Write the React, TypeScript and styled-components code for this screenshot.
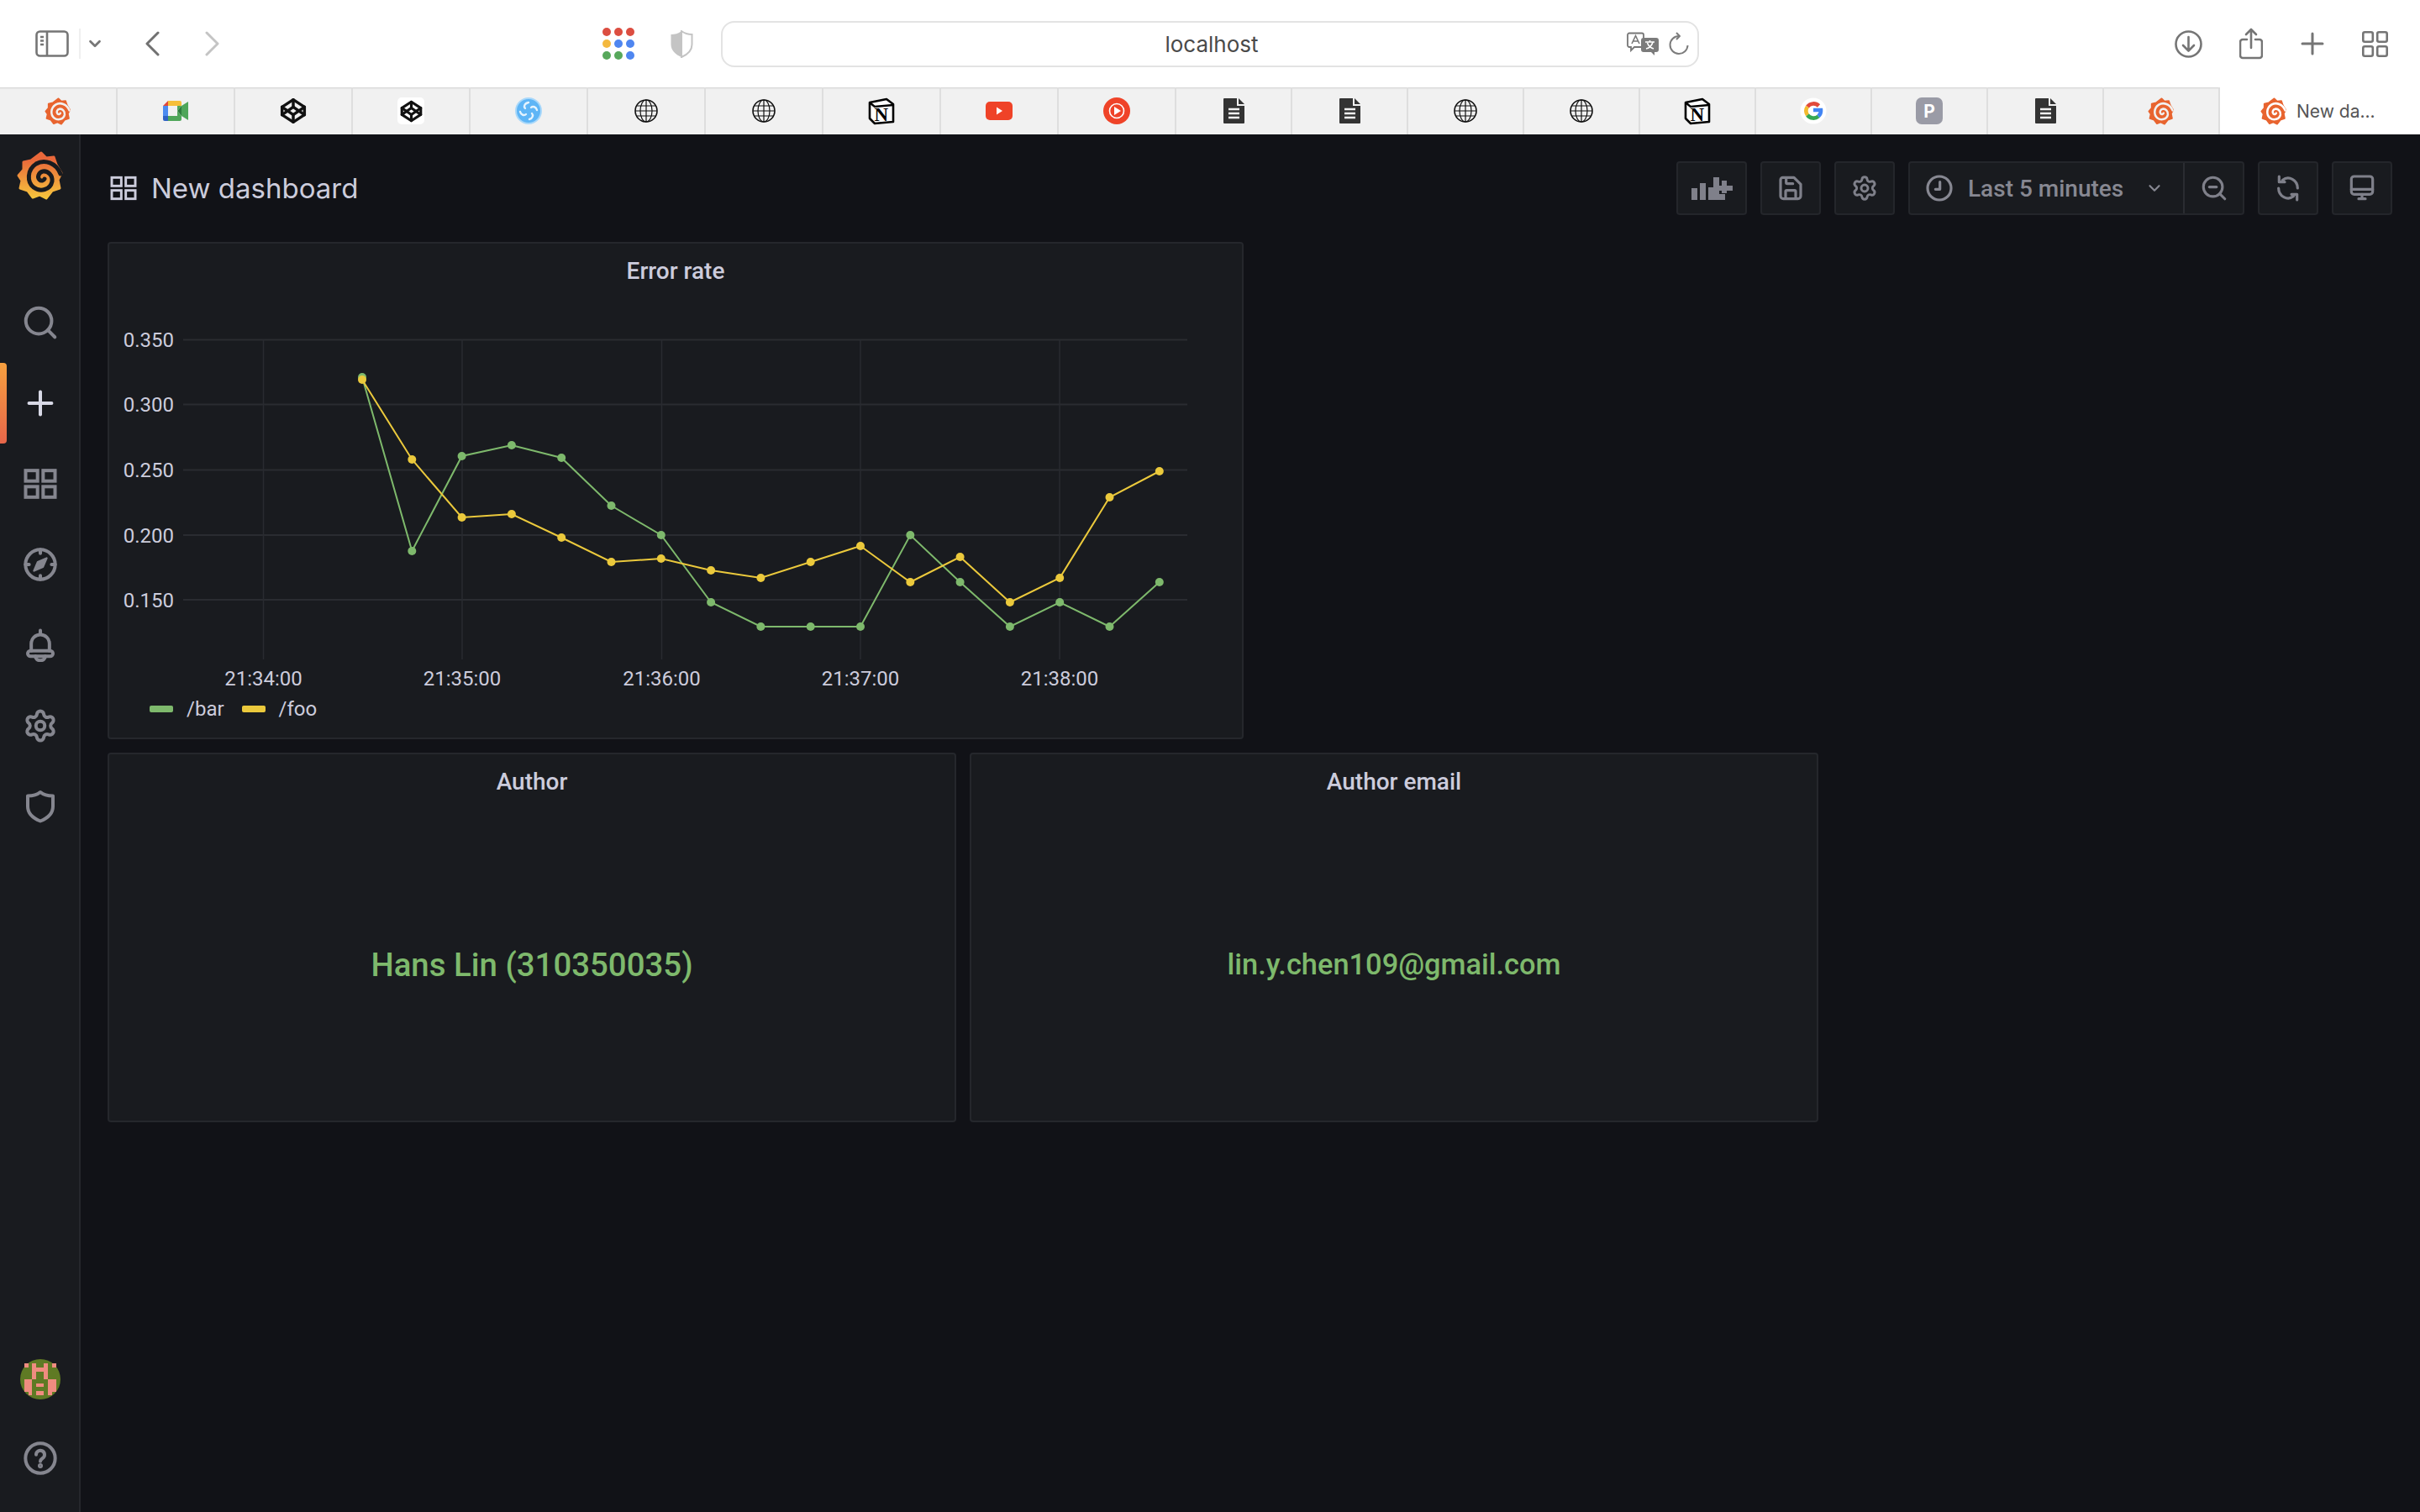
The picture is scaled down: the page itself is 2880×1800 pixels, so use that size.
import React from "react";
import styled, { createGlobalStyle } from "styled-components";
import { Search, Plus, Settings, ZoomOut, Codepen, ChevronDown } from "lucide-react";

const GlobalStyle = createGlobalStyle`
  html, body {
    margin: 0;
    padding: 0;
    background: #111217;
  }
`;

const Page = styled.div`
  width: 2880px;
  height: 1800px;
  display: flex;
  flex-direction: column;
  overflow: hidden;
  font-family: Roboto, "Liberation Sans", sans-serif;
`;

/* browser chrome */

const BrowserBar = styled.div`
  height: 104px;
  background: #fff;
  display: flex;
  align-items: center;
  color: #757575;
`;

const BarLeft = styled.div`
  width: 717px;
  padding-left: 42px;
  box-sizing: border-box;
  display: flex;
  align-items: center;
`;

const BarDivider = styled.div`
  width: 2px;
  height: 36px;
  background: #efefef;
  margin: 0 6px 0 12px;
`;

const ChromeIcon = styled.svg<{ $ml?: number }>`
  display: block;
  flex: none;
  margin-left: ${(p) => p.$ml ?? 0}px;
`;

const AddressBar = styled.div`
  width: 1164px;
  height: 55px;
  margin-left: 33px;
  box-sizing: border-box;
  border: 2px solid #e3e3e3;
  border-radius: 16px;
  display: flex;
  align-items: center;
  padding-right: 10px;
`;

const AddressText = styled.div`
  flex: 1;
  text-align: center;
  padding-left: 88px;
  font-family: Inter, "Liberation Sans", sans-serif;
  font-size: 26px;
  color: #4a4a4a;
`;

const BarRight = styled.div`
  flex: 1;
  display: flex;
  align-items: center;
  padding-left: 566px;
`;

const TabStrip = styled.div`
  height: 56px;
  display: flex;
  background: #f1f1f1;
  box-shadow: inset 0 3px 2px -2px #cfcfcf;
`;

const Tab = styled.div<{ $width: number }>`
  width: ${(p) => p.$width}px;
  box-sizing: border-box;
  border-right: 2px solid #dedede;
  display: flex;
  align-items: center;
  justify-content: center;
`;

const ActiveTab = styled.div`
  flex: 1;
  background: #fff;
  display: flex;
  align-items: center;
  padding-left: 47px;
  gap: 10px;
  font-family: Inter, "Liberation Sans", sans-serif;
  font-size: 21px;
  color: #555;
`;

/* grafana shell */

const Shell = styled.div`
  flex: 1;
  display: flex;
  background: #111217;
  min-height: 0;
`;

const Sidebar = styled.nav`
  width: 96px;
  box-sizing: border-box;
  padding-left: 2px;
  background: #191b1f;
  border-right: 2px solid #25272c;
  display: flex;
  flex-direction: column;
  align-items: stretch;
`;

const LogoSlot = styled.div`
  height: 176px;
  padding-top: 16px;
  box-sizing: border-box;
  display: flex;
  justify-content: center;
`;

const NavItem = styled.div<{ $active?: boolean }>`
  height: 96px;
  box-sizing: border-box;
  position: relative;
  display: flex;
  align-items: center;
  justify-content: center;
  color: ${(p) => (p.$active ? "#d8d9e6" : "#85868f")};

  ${(p) =>
    p.$active &&
    `&::before {
      content: "";
      position: absolute;
      left: -2px;
      top: 0;
      bottom: 0;
      width: 8px;
      border-radius: 0 4px 4px 0;
      background: linear-gradient(#f6a03f, #e6664a);
    }`}
`;

const AvatarSlot = styled(NavItem)`
  padding-top: 4px;
`;

const NavBottom = styled.div`
  margin-top: auto;
  padding-bottom: 16px;
`;

const Main = styled.main`
  flex: 1;
  display: flex;
  flex-direction: column;
  padding: 0 33px 0 32px;
  min-width: 0;
`;

const Header = styled.header`
  height: 128px;
  display: flex;
  align-items: center;
`;

const DashTitle = styled.div`
  display: flex;
  align-items: center;
  gap: 17px;
  padding-left: 3px;
  font-family: Inter, "Liberation Sans", sans-serif;
  font-size: 33px;
  color: #ccccdc;
  flex: 1;
`;

const Toolbar = styled.div`
  display: flex;
  gap: 16px;
`;

const ToolButton = styled.div<{ $width: number }>`
  width: ${(p) => p.$width}px;
  height: 64px;
  box-sizing: border-box;
  background: #191b1f;
  border: 2px solid #24262b;
  border-radius: 4px;
  display: flex;
  align-items: center;
  justify-content: center;
  color: #7f808a;
`;

const TimePicker = styled.div`
  width: 400px;
  height: 64px;
  box-sizing: border-box;
  background: #191b1f;
  border: 2px solid #24262b;
  border-radius: 4px;
  display: flex;
  color: #7f808a;
`;

const TimeRange = styled.div`
  width: 327px;
  box-sizing: border-box;
  border-right: 2px solid #2a2c31;
  display: flex;
  align-items: center;
  padding-left: 19px;
  font-size: 28px;
  font-weight: 500;
  color: #878892;
`;

const TimeLabel = styled.span`
  margin: 0 26px 0 18px;
  white-space: nowrap;
`;

const TimeZoom = styled.div`
  flex: 1;
  display: flex;
  align-items: center;
  justify-content: center;
`;

const Panels = styled.div`
  display: flex;
  flex-direction: column;
  gap: 16px;
`;

const PanelRow = styled.div`
  display: flex;
  gap: 16px;
`;

const Panel = styled.section<{ $width: number; $height: number }>`
  width: ${(p) => p.$width}px;
  height: ${(p) => p.$height}px;
  box-sizing: border-box;
  background: #191b1f;
  border: 2px solid #25272c;
  border-radius: 4px;
  display: flex;
  flex-direction: column;
`;

const PanelTitle = styled.h2`
  margin: 0;
  height: 64px;
  flex: none;
  display: flex;
  align-items: center;
  justify-content: center;
  font-size: 28px;
  font-weight: 500;
  color: #ccccdc;
`;

const Legend = styled.div`
  height: 36px;
  display: flex;
  align-items: center;
  padding-left: 48px;
  font-size: 24px;
  color: #ccccdc;
`;

const LegendSwatch = styled.span<{ $color: string }>`
  width: 28px;
  height: 8px;
  border-radius: 2px;
  background: ${(p) => p.$color};
  margin-right: 16px;
`;

const LegendName = styled.span`
  margin-right: 21px;
`;

const StatBody = styled.div<{ $size: number }>`
  flex: 1;
  display: flex;
  align-items: center;
  justify-content: center;
  font-size: ${(p) => p.$size}px;
  font-weight: 500;
  color: #7eb96c;
`;

const GREEN = "#7eb96c";
const YELLOW = "#ebc93c";
const xs = Array.from({ length: 17 }, (_, i) => 431 + i * 59.3);
const barYs = [449, 656, 543, 530, 545, 602, 637, 717, 746, 746, 746, 637, 693, 746, 717, 746, 693];
const fooYs = [452, 547, 616, 612, 640, 669, 665, 679, 688, 669, 650, 693, 663, 717, 688, 592, 561];
const yTicks = [
  { label: "0.350", y: 404.5 },
  { label: "0.300", y: 481.5 },
  { label: "0.250", y: 559.5 },
  { label: "0.200", y: 637 },
  { label: "0.150", y: 714 },
];
const xTicks = [
  { label: "21:34:00", x: 313.5 },
  { label: "21:35:00", x: 550 },
  { label: "21:36:00", x: 787.5 },
  { label: "21:37:00", x: 1024 },
  { label: "21:38:00", x: 1261 },
];

const ChartSvg = styled.svg`
  display: block;
  flex: none;
`;

const AxisText = styled.text`
  font-family: Roboto, "Liberation Sans", sans-serif;
  font-size: 24px;
  fill: #ccccdc;
`;

const Series: React.FC<{ ys: number[]; color: string }> = ({ ys, color }) => (
  <g>
    <polyline points={ys.map((y, i) => `${xs[i]},${y}`).join(" ")} fill="none" stroke={color} strokeWidth={2} />
    {ys.map((y, i) => (
      <circle key={i} cx={xs[i]} cy={y} r={5} fill={color} />
    ))}
  </g>
);

// drawn in page coordinates, the viewBox starts where the panel body starts
const ErrorChart: React.FC = () => (
  <ChartSvg width={1348} height={472} viewBox="130 354 1348 472">
    {yTicks.map((t) => (
      <g key={t.label}>
        <line x1={218} x2={1413} y1={t.y} y2={t.y} stroke="#2a2c31" strokeWidth={2} />
        <AxisText x={207} y={t.y + 8.5} textAnchor="end">
          {t.label}
        </AxisText>
      </g>
    ))}
    {xTicks.map((t) => (
      <g key={t.label}>
        <line x1={t.x} x2={t.x} y1={404} y2={785} stroke="#292b30" strokeWidth={1.5} />
        <AxisText x={t.x} y={816} textAnchor="middle">
          {t.label}
        </AxisText>
      </g>
    ))}
    <Series ys={barYs} color={GREEN} />
    <Series ys={fooYs} color={YELLOW} />
  </ChartSvg>
);

/* icons */

const LOGO_OUTLINE =
  "M33 6 L39 12 L48 11 L51 20 L57 30 L53 38 L55 48 L46 51 L39 60 L31 56 L23 59 L17 51 L8 48 L10 39 L6 33 L12 26 L12 17 L21 15 Z";
const LOGO_SPIRAL =
  "M56 31 C51 18 37 13 27 19 C16 26 16 41 24 47 C32 53 44 50 46 40 C47 33 41 27 35 28 C30 29 28 35 31 38 C33 40 36 39 37 37";

const GrafanaLogo: React.FC = () => (
  <svg width={64} height={66} viewBox="0 0 64 66" style={{ display: "block" }}>
    <defs>
      <linearGradient id="grafanaFlame" x1="0" y1="0" x2="0" y2="1">
        <stop offset="0.15" stopColor="#e9683a" />
        <stop offset="1" stopColor="#f6c53d" />
      </linearGradient>
    </defs>
    <path d={LOGO_OUTLINE} fill="url(#grafanaFlame)" stroke="url(#grafanaFlame)" strokeWidth={3} strokeLinejoin="round" />
    <path d={LOGO_SPIRAL} fill="none" stroke="#191b1f" strokeWidth={5} strokeLinecap="round" />
  </svg>
);

const GrafanaTabIcon: React.FC<{ bg: string }> = ({ bg }) => (
  <svg width={34} height={35} viewBox="2 2 60 62">
    <path d={LOGO_OUTLINE} fill="#e8642f" stroke="#e8642f" strokeWidth={3} strokeLinejoin="round" />
    <path d={LOGO_SPIRAL} fill="none" stroke={bg} strokeWidth={4.5} strokeLinecap="round" />
  </svg>
);

const MeetIcon: React.FC = () => (
  <svg width={30} height={24} viewBox="0 0 30 24">
    <path d="M6 0 H20 a2 2 0 0 1 2 2 V6 H6 Z" fill="#f6bf3a" />
    <path d="M6 0 V6 H0 Z" fill="#e2483a" />
    <rect y={6} width={6} height={12} fill="#4c8bf0" />
    <path d="M0 18 H6 V24 H2 a2 2 0 0 1 -2 -2 Z" fill="#2f62c4" />
    <path d="M6 18 H22 V22 a2 2 0 0 1 -2 2 H6 Z" fill="#4fa65a" />
    <path d="M22 6 V18 L17 12 Z" fill="#2f7d3f" />
    <path d="M22 6 L30 1 V23 L22 18 Z" fill="#4fa65a" />
    <path d="M17 6 H22 L17 12 L22 18 H17 Z" fill="#4fa65a" />
  </svg>
);

const CodepenTile = styled.div`
  width: 32px;
  height: 32px;
  background: #fff;
  border-radius: 5px;
  display: flex;
  align-items: center;
  justify-content: center;
`;

const QuantumIcon: React.FC = () => (
  <svg width={32} height={32} viewBox="0 0 32 32">
    <circle cx={16} cy={16} r={15} fill="#5eb5f6" />
    <circle cx={16} cy={16} r={15} fill="none" stroke="#a9d8fa" strokeWidth={2} />
    <path d="M16 6 C11 7 10 11 12 13 M26 15 C25 11 21 10 19 12 M17 26 C21 25 22 21 20 19 M6 17 C7 21 11 22 13 20" fill="none" stroke="#e4f3fe" strokeWidth={2.4} strokeLinecap="round" />
  </svg>
);

const GlobeIcon: React.FC = () => (
  <svg width={28} height={28} viewBox="0 0 28 28" fill="none" stroke="#111" strokeWidth={1.2}>
    <circle cx={14} cy={14} r={13} strokeWidth={1.6} />
    <ellipse cx={14} cy={14} rx={7} ry={13} />
    <path d="M14 1 V27 M2 8 H26 M1 14 H27 M2 20 H26" />
  </svg>
);

const NotionGlyph = styled.text`
  font-family: "Liberation Serif", serif;
  font-weight: 700;
  font-size: 23px;
  fill: #000;
`;

const NotionIcon: React.FC = () => (
  <svg width={32} height={33} viewBox="0 0 32 33">
    <path d="M2 6 L22 2 L30 8 V29 L8 31 L2 25 Z" fill="#fff" stroke="#000" strokeWidth={2.6} strokeLinejoin="round" />
    <path d="M3 7 L8 11 L30 9" fill="none" stroke="#000" strokeWidth={2.4} />
    <NotionGlyph x={7.5} y={28}>N</NotionGlyph>
  </svg>
);

const YoutubeIcon: React.FC = () => (
  <svg width={32} height={22} viewBox="0 0 32 22">
    <rect width={32} height={22} rx={5} fill="#ef4328" />
    <path d="M13 6.5 L20 11 L13 15.5 Z" fill="#fff" />
  </svg>
);

const MusicIcon: React.FC = () => (
  <svg width={32} height={32} viewBox="0 0 32 32">
    <circle cx={16} cy={16} r={16} fill="#ef4328" />
    <circle cx={16} cy={16} r={8.5} fill="none" stroke="#fff" strokeWidth={1.6} />
    <path d="M13 11 L21 16 L13 21 Z" fill="#fff" />
  </svg>
);

const DocIcon: React.FC = () => (
  <svg width={25} height={30} viewBox="0 0 25 30">
    <path d="M1 0 H16 V9 H25 V29 a1 1 0 0 1 -1 1 H1 a1 1 0 0 1 -1 -1 V1 a1 1 0 0 1 1 -1 Z" fill="#333" />
    <path d="M18 0 L25 7 H18 Z" fill="#333" />
    <path d="M6 13 H19 M6 18 H19 M6 23 H19" stroke="#f1f1f1" strokeWidth={2.4} />
  </svg>
);

const GoogleIcon: React.FC = () => (
  <svg width={32} height={32} viewBox="0 0 32 32" fill="none" strokeWidth={4.6}>
    <circle cx={16} cy={16} r={15.5} fill="#fff" />
    <path d="M9 11 A9 9 0 0 1 22.5 10" stroke="#e24a3b" />
    <path d="M9 11 A9 9 0 0 0 9 21" stroke="#f4bb2e" />
    <path d="M9 21 A9 9 0 0 0 22 22.5" stroke="#35a853" />
    <path d="M22 22.5 A9 9 0 0 0 25 15 H16" stroke="#4285f4" />
  </svg>
);

const LetterTile = styled.div`
  width: 32px;
  height: 32px;
  border-radius: 7px;
  background: #9a9ba6;
  color: #fff;
  display: flex;
  align-items: center;
  justify-content: center;
  font-family: Inter, "Liberation Sans", sans-serif;
  font-weight: 700;
  font-size: 21px;
`;

const tabIcons: React.ReactNode[] = [
  <GrafanaTabIcon bg="#f1f1f1" />,
  <MeetIcon />,
  <Codepen size={32} color="#111" strokeWidth={2.6} />,
  <CodepenTile>
    <Codepen size={27} color="#111" strokeWidth={2.8} />
  </CodepenTile>,
  <QuantumIcon />,
  <GlobeIcon />,
  <GlobeIcon />,
  <NotionIcon />,
  <YoutubeIcon />,
  <MusicIcon />,
  <DocIcon />,
  <DocIcon />,
  <GlobeIcon />,
  <GlobeIcon />,
  <NotionIcon />,
  <GoogleIcon />,
  <LetterTile>P</LetterTile>,
  <DocIcon />,
  <GrafanaTabIcon bg="#f1f1f1" />,
];

const dots = [
  ["#dc4e41", "#dc4e41", "#dc4e41"],
  ["#f4b93f", "#4f86f0", "#4f86f0"],
  ["#57a85b", "#57a85b", "#4f86f0"],
];

const AppDots: React.FC = () => (
  <svg width={38} height={38} viewBox="0 0 38 38" style={{ display: "block" }}>
    {dots.map((row, r) =>
      row.map((c, i) => <circle key={`${r}-${i}`} cx={5 + i * 14} cy={5 + r * 14} r={5} fill={c} />)
    )}
  </svg>
);

const navStroke = {
  fill: "none",
  stroke: "currentColor",
  strokeWidth: 2.4,
  strokeLinecap: "round" as const,
  strokeLinejoin: "round" as const,
};

const GridIcon: React.FC<{ size: number; width?: number }> = ({ size, width = 2.4 }) => (
  <svg width={size} height={size} viewBox="0 0 24 24" {...navStroke} strokeWidth={width} strokeLinecap="square" strokeLinejoin="miter">
    <rect x={1.5} y={2.5} width={8.5} height={7.5} />
    <rect x={14} y={2.5} width={8.5} height={7.5} />
    <rect x={1.5} y={14} width={8.5} height={7.5} />
    <rect x={14} y={14} width={8.5} height={7.5} />
  </svg>
);

const CompassIcon: React.FC = () => (
  <svg width={40} height={40} viewBox="0 0 24 24" {...navStroke}>
    <circle cx={12} cy={12} r={10.6} />
    <path d="M12 1.4 V4 M12 20 V22.6 M1.4 12 H4 M20 12 H22.6" />
    <path d="M16.5 7.5 L13.8 13.8 L7.5 16.5 L10.2 10.2 Z" fill="currentColor" strokeWidth={1.4} />
  </svg>
);

const BellIcon: React.FC = () => (
  <svg width={40} height={40} viewBox="0 0 24 24" {...navStroke}>
    <path d="M12 1.5 V4 M5.5 16 V11 a6.5 6.5 0 0 1 13 0 V16" />
    <path d="M3 18 a2 2 0 0 1 2 -2 H19 a2 2 0 0 1 0 4 H5 a2 2 0 0 1 -2 -2 Z" />
    <path d="M8.5 20 a3.5 3 0 0 0 7 0" />
  </svg>
);

const ShieldIcon: React.FC = () => (
  <svg width={40} height={40} viewBox="0 0 24 24" {...navStroke}>
    <path d="M3 4.5 C7 4.5 10 3.5 12 1.8 C14 3.5 17 4.5 21 4.5 V12 C21 17 17 20.5 12 22.5 C7 20.5 3 17 3 12 Z" />
  </svg>
);

const HelpIcon: React.FC = () => (
  <svg width={40} height={40} viewBox="0 0 24 24" {...navStroke}>
    <circle cx={12} cy={12} r={10.6} />
    <path d="M9 9.5 a3 3 0 1 1 4.6 2.5 c-1 .7 -1.6 1.2 -1.6 2.2" />
    <circle cx={12} cy={17.4} r={0.6} fill="currentColor" />
  </svg>
);

const AvatarIcon: React.FC = () => (
  <svg width={48} height={48} viewBox="0 0 48 48" style={{ display: "block" }}>
    <circle cx={24} cy={24} r={24} fill="#5f7a24" />
    <g fill="#f08c80">
      <rect x={14} y={5} width={5} height={19} />
      <rect x={28} y={5} width={5} height={19} />
      <rect x={19} y={10} width={9} height={5} />
      <rect x={5} y={5} width={5} height={5} />
      <rect x={38} y={5} width={5} height={5} />
      <rect x={5} y={24} width={9} height={15} />
      <rect x={33} y={24} width={10} height={15} />
      <rect x={19} y={29} width={9} height={4} />
      <rect x={19} y={38} width={9} height={5} />
      <rect x={10} y={38} width={4} height={5} />
      <rect x={33} y={38} width={5} height={5} />
    </g>
  </svg>
);

const AddPanelIcon: React.FC = () => (
  <svg width={49} height={27} viewBox="0 0 49 27" fill="currentColor">
    <rect x={0} y={13} width={7} height={14} />
    <rect x={10} y={7} width={7} height={20} />
    <rect x={20} y={12} width={6} height={15} />
    <rect x={26} y={0} width={7} height={27} />
    <rect x={33} y={20} width={7} height={7} />
    <path d="M36 4 H42 V10 H49 V16 H42 V19 H36 V16 H33 V10 H36 Z" />
  </svg>
);

const SaveIcon: React.FC = () => (
  <svg width={32} height={32} viewBox="0 0 24 24" {...navStroke}>
    <path d="M5 2.5 H15 L21 8.5 V19 a2.5 2.5 0 0 1 -2.5 2.5 H5.5 a2.5 2.5 0 0 1 -2.5 -2.5 V4.5 a2 2 0 0 1 2 -2 Z" />
    <path d="M7.5 21 V15 a1 1 0 0 1 1 -1 H15.5 a1 1 0 0 1 1 1 V21 M8 3 V7 a1 1 0 0 0 1 1 H14" />
  </svg>
);

const ClockIcon: React.FC = () => (
  <svg width={32} height={32} viewBox="0 0 24 24" {...navStroke}>
    <circle cx={12} cy={12} r={10.5} />
    <path d="M12.5 6.5 V13 H8.5" />
  </svg>
);

const SyncIcon: React.FC = () => (
  <svg width={32} height={32} viewBox="0 0 24 24" {...navStroke}>
    <path d="M20.5 12 A8.5 9 0 0 0 7 4.8" />
    <path d="M4 1.5 V6.5 H9" />
    <path d="M3.5 12 A8.5 9 0 0 0 17 19.2" />
    <path d="M20 22.5 V17.5 H15" />
  </svg>
);

const MonitorIcon: React.FC = () => (
  <svg width={32} height={32} viewBox="0 0 24 24" {...navStroke}>
    <rect x={2.5} y={1.5} width={19} height={16} rx={2.5} />
    <path d="M2.5 13 H21.5 M9 21.5 H15 M12 17.5 V21.5" />
  </svg>
);

const SidebarToggleIcon: React.FC = () => (
  <ChromeIcon width={40} height={32} viewBox="0 0 40 32" fill="none" stroke="currentColor" strokeWidth={2.6}>
    <rect x={1.5} y={1.5} width={37} height={29} rx={4} />
    <path d="M14 2 V30 M6 8 H10 M6 12.5 H10 M6 17 H10" />
  </ChromeIcon>
);

const ChromeChevron: React.FC<{ dir: "left" | "right"; color: string; ml: number }> = ({ dir, color, ml }) => (
  <ChromeIcon $ml={ml} width={18} height={30} viewBox="0 0 18 30" fill="none" stroke={color} strokeWidth={3} strokeLinecap="round" strokeLinejoin="round">
    <path d={dir === "left" ? "M16 2 L3 15 L16 28" : "M2 2 L15 15 L2 28"} />
  </ChromeIcon>
);

const TranslateIcon: React.FC = () => (
  <ChromeIcon width={38} height={28} viewBox="0 0 38 28">
    <path d="M3 1.5 H18 a2 2 0 0 1 2 2 V16 a2 2 0 0 1 -2 2 H9 L5 22 V18 H3 a2 2 0 0 1 -2 -2 V3.5 a2 2 0 0 1 2 -2 Z" fill="#fff" stroke="#777" strokeWidth={1.8} />
    <path d="M6 14 L10.5 4.5 L15 14 M7.5 11 H13.5" fill="none" stroke="#777" strokeWidth={1.6} />
    <path d="M20 7 H35 a3 3 0 0 1 3 3 V21 a3 3 0 0 1 -3 3 H33 V28 L29 24 H20 a3 3 0 0 1 -3 -3 V10 a3 3 0 0 1 3 -3 Z" fill="#7b7b7b" />
    <path d="M22 12 H33 M27.5 10 V12 M31 12 C30 16 27 19 23 20 M24.5 13 C25.5 16 28 19 32 20" fill="none" stroke="#fff" strokeWidth={1.6} />
  </ChromeIcon>
);

const ReloadIcon: React.FC = () => (
  <ChromeIcon $ml={12} width={24} height={28} viewBox="0 0 24 28" fill="none" stroke="#7c7c7c" strokeWidth={2}>
    <path d="M12 5 A10.5 10.5 0 1 0 22.5 16" />
    <path d="M9 1 L13 5 L9 9" strokeLinejoin="round" />
  </ChromeIcon>
);

const App: React.FC = () => (
  <Page>
    <GlobalStyle />
    <BrowserBar>
      <BarLeft>
        <SidebarToggleIcon />
        <BarDivider />
        <ChevronDown size={22} strokeWidth={3} color="#777" />
        <ChromeChevron dir="left" color="#717171" ml={48} />
        <ChromeChevron dir="right" color="#c4c4c4" ml={54} />
      </BarLeft>
      <AppDots />
      <ChromeIcon $ml={42} width={28} height={33} viewBox="0 0 28 33">
        <path d="M14 1 C10 4 6 5 1.5 5 V17 C1.5 24 7 29 14 32 Z" fill="#c4c4c4" />
        <path d="M14 1 C18 4 22 5 26.5 5 V17 C26.5 24 21 29 14 32 Z" fill="#fff" stroke="#c4c4c4" strokeWidth={2} />
      </ChromeIcon>
      <AddressBar>
        <AddressText>localhost</AddressText>
        <TranslateIcon />
        <ReloadIcon />
      </AddressBar>
      <BarRight>
        <ChromeIcon width={33} height={33} viewBox="0 0 33 33" fill="none" stroke="#757575" strokeWidth={2.6} strokeLinecap="round" strokeLinejoin="round">
          <circle cx={16.5} cy={16.5} r={15} />
          <path d="M16.5 8 V24 M10 18 L16.5 24.5 L23 18" />
        </ChromeIcon>
        <ChromeIcon $ml={44} width={28} height={38} viewBox="0 0 28 38" fill="none" stroke="#757575" strokeWidth={2.6} strokeLinecap="round" strokeLinejoin="round">
          <path d="M9 14 H4 a3 3 0 0 0 -3 3 V33 a3 3 0 0 0 3 3 H24 a3 3 0 0 0 3 -3 V17 a3 3 0 0 0 -3 -3 H19" />
          <path d="M14 24 V2 M8 8 L14 2 L20 8" />
        </ChromeIcon>
        <ChromeIcon $ml={45} width={28} height={28} viewBox="0 0 28 28" fill="none" stroke="#757575" strokeWidth={3} strokeLinecap="round">
          <path d="M14 2 V26 M2 14 H26" />
        </ChromeIcon>
        <ChromeIcon $ml={45} width={31} height={31} viewBox="0 0 31 31" fill="none" stroke="#757575" strokeWidth={2.6}>
          <rect x={1.3} y={1.3} width={11.5} height={11.5} rx={2} />
          <rect x={18.2} y={1.3} width={11.5} height={11.5} rx={2} />
          <rect x={1.3} y={18.2} width={11.5} height={11.5} rx={2} />
          <rect x={18.2} y={18.2} width={11.5} height={11.5} rx={2} />
        </ChromeIcon>
      </BarRight>
    </BrowserBar>
    <TabStrip>
      {tabIcons.map((icon, i) => (
        <Tab key={i} $width={i < 10 ? 140 : 138}>
          {icon}
        </Tab>
      ))}
      <ActiveTab>
        <GrafanaTabIcon bg="#fff" />
        New da...
      </ActiveTab>
    </TabStrip>
    <Shell>
      <Sidebar>
        <LogoSlot>
          <GrafanaLogo />
        </LogoSlot>
        <NavItem>
          <Search size={46} strokeWidth={2.1} />
        </NavItem>
        <NavItem $active>
          <Plus size={46} strokeWidth={2.1} />
        </NavItem>
        <NavItem>
          <GridIcon size={40} />
        </NavItem>
        <NavItem>
          <CompassIcon />
        </NavItem>
        <NavItem>
          <BellIcon />
        </NavItem>
        <NavItem>
          <Settings size={42} strokeWidth={2.3} />
        </NavItem>
        <NavItem>
          <ShieldIcon />
        </NavItem>
        <NavBottom>
          <AvatarSlot>
            <AvatarIcon />
          </AvatarSlot>
          <NavItem>
            <HelpIcon />
          </NavItem>
        </NavBottom>
      </Sidebar>
      <Main>
        <Header>
          <DashTitle>
            <GridIcon size={32} width={2.2} />
            New dashboard
          </DashTitle>
          <Toolbar>
            <ToolButton $width={84}>
              <AddPanelIcon />
            </ToolButton>
            <ToolButton $width={72}>
              <SaveIcon />
            </ToolButton>
            <ToolButton $width={72}>
              <Settings size={32} strokeWidth={2.2} />
            </ToolButton>
            <TimePicker>
              <TimeRange>
                <ClockIcon />
                <TimeLabel>Last 5 minutes</TimeLabel>
                <ChevronDown size={22} strokeWidth={2.4} />
              </TimeRange>
              <TimeZoom>
                <ZoomOut size={34} strokeWidth={2.2} />
              </TimeZoom>
            </TimePicker>
            <ToolButton $width={72}>
              <SyncIcon />
            </ToolButton>
            <ToolButton $width={72}>
              <MonitorIcon />
            </ToolButton>
          </Toolbar>
        </Header>
        <Panels>
          <Panel $width={1352} $height={592}>
            <PanelTitle>Error rate</PanelTitle>
            <ErrorChart />
            <Legend>
              <LegendSwatch $color={GREEN} />
              <LegendName>/bar</LegendName>
              <LegendSwatch $color={YELLOW} />
              <LegendName>/foo</LegendName>
            </Legend>
          </Panel>
          <PanelRow>
            <Panel $width={1010} $height={440}>
              <PanelTitle>Author</PanelTitle>
              <StatBody $size={38.4}>Hans Lin (310350035)</StatBody>
            </Panel>
            <Panel $width={1010} $height={440}>
              <PanelTitle>Author email</PanelTitle>
              <StatBody $size={34.4}>lin.y.chen109@gmail.com</StatBody>
            </Panel>
          </PanelRow>
        </Panels>
      </Main>
    </Shell>
  </Page>
);

export default App;
